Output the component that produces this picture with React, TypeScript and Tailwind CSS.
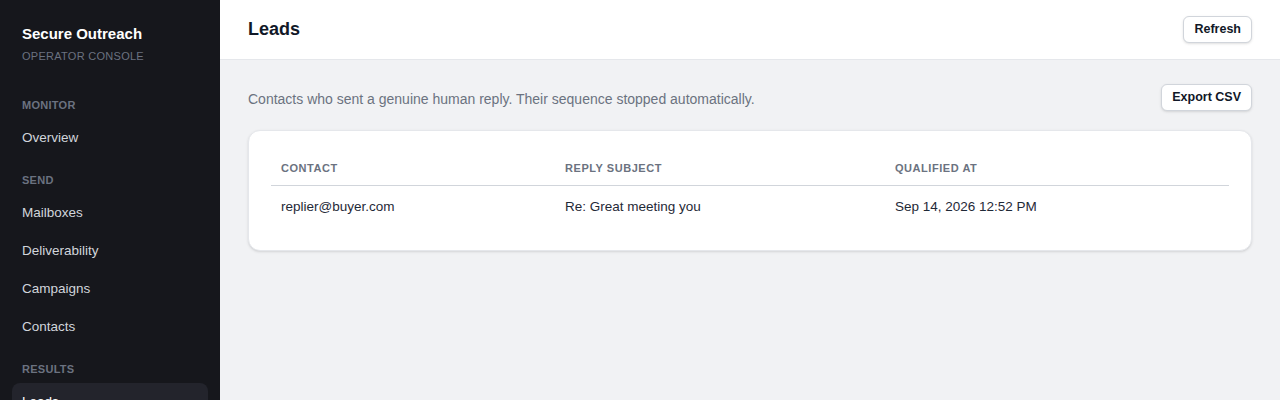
import * as React from 'react';

const sections = [
  { label: 'Monitor', items: ['Overview'] },
  { label: 'Send', items: ['Mailboxes', 'Deliverability', 'Campaigns', 'Contacts'] },
  { label: 'Results', items: ['Leads'] },
];

const App: React.FC = () => {
  return (
    <div
      className="flex h-[400px] w-[1280px] overflow-hidden bg-[#f1f2f4]"
      style={{ fontFamily: '"Liberation Sans", Arial, sans-serif' }}
    >
      {/* Sidebar */}
      <aside className="flex w-[220px] shrink-0 flex-col bg-[#16171c]">
        <div className="px-[22px] pt-6">
          <div className="text-[15px] font-bold leading-5 text-white">Secure Outreach</div>
          <div className="mt-[5px] text-[11px] uppercase leading-[14px] tracking-wide text-[#6b7280]">
            Operator Console
          </div>
        </div>
        <nav className="mt-[35px] px-3">
          {sections.map((section, i) => (
            <div key={section.label} className={i > 0 ? 'mt-[16px]' : ''}>
              <div className="mb-[7px] px-[10px] text-[11px] font-bold uppercase leading-[14px] tracking-wide text-[#6b7280]">
                {section.label}
              </div>
              {section.items.map((item) => (
                <div
                  key={item}
                  className={
                    item === 'Leads'
                      ? 'rounded-lg bg-[#23242c] px-[10px] py-[9px] text-[13.5px] leading-5 text-white'
                      : 'rounded-lg px-[10px] py-[9px] text-[13.5px] leading-5 text-[#d1d5db]'
                  }
                >
                  {item}
                </div>
              ))}
            </div>
          ))}
        </nav>
      </aside>

      {/* Main */}
      <main className="flex flex-1 flex-col">
        <header className="flex h-[60px] items-center justify-between border-b border-[#e5e7eb] bg-white px-[28px]">
          <h1 className="text-[18px] font-bold text-[#111827]">Leads</h1>
          <button className="h-[27px] rounded-md border border-[#d1d5db] bg-white px-[10px] text-[12.5px] font-bold text-[#111827] shadow-sm">
            Refresh
          </button>
        </header>

        <div className="px-[28px] pt-6">
          <div className="mb-[19px] flex items-center justify-between">
            <p className="mt-1 text-[14px] text-[#6b7280]">
              Contacts who sent a genuine human reply. Their sequence stopped automatically.
            </p>
            <button className="h-[27px] rounded-md border border-[#d1d5db] bg-white px-[10px] text-[12.5px] font-bold text-[#111827] shadow-sm">
              Export CSV
            </button>
          </div>

          <div className="rounded-xl border border-[#e5e7eb] bg-white p-[22px] shadow-sm">
            <table className="w-full border-collapse text-left">
              <thead>
                <tr className="border-b border-[#d1d5db]">
                  <th className="w-[284px] px-[10px] pb-[10px] pt-[9px] text-[11px] font-bold uppercase leading-[13px] tracking-wider text-[#6b7280]">
                    Contact
                  </th>
                  <th className="w-[330px] px-[10px] pb-[10px] pt-[9px] text-[11px] font-bold uppercase leading-[13px] tracking-wider text-[#6b7280]">
                    Reply Subject
                  </th>
                  <th className="px-[10px] pb-[10px] pt-[9px] text-[11px] font-bold uppercase leading-[13px] tracking-wider text-[#6b7280]">
                    Qualified At
                  </th>
                </tr>
              </thead>
              <tbody>
                <tr>
                  <td className="px-[10px] py-[11px] text-[13.5px] leading-5 text-[#1f2937]">replier@buyer.com</td>
                  <td className="px-[10px] py-[11px] text-[13.5px] leading-5 text-[#1f2937]">Re: Great meeting you</td>
                  <td className="px-[10px] py-[11px] text-[13.5px] leading-5 text-[#1f2937]">Sep 14, 2026 12:52 PM</td>
                </tr>
              </tbody>
            </table>
          </div>
        </div>
      </main>
    </div>
  );
};

export default App;
